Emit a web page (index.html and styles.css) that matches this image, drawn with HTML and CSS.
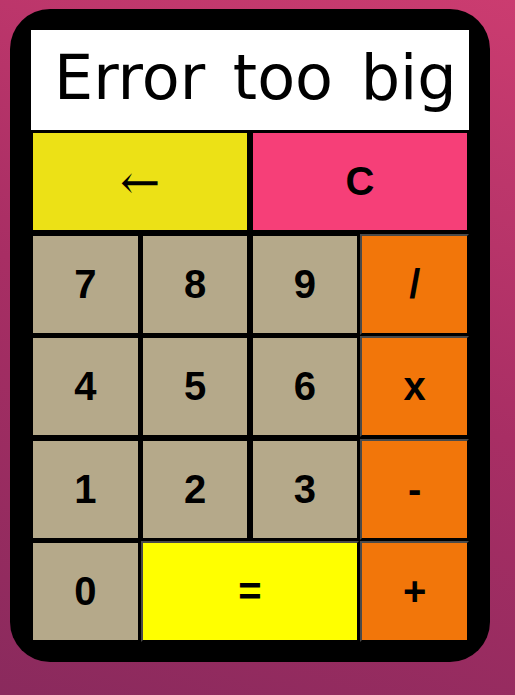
FILE: index.html
```html
<!DOCTYPE html>
<html lang="en">
<head>
<meta charset="utf-8">
<title>Calculator</title>
<link rel="stylesheet" href="styles.css">
</head>
<body>
<div class="calc">
  <div class="display">Error too big</div>
  <div class="keys">
    <button class="key wide back">←</button>
    <button class="key wide clear">C</button>
    <button class="key num">7</button>
    <button class="key num">8</button>
    <button class="key num">9</button>
    <button class="key op">/</button>
    <button class="key num">4</button>
    <button class="key num">5</button>
    <button class="key num">6</button>
    <button class="key op">x</button>
    <button class="key num">1</button>
    <button class="key num">2</button>
    <button class="key num">3</button>
    <button class="key op">-</button>
    <button class="key num">0</button>
    <button class="key wide equals">=</button>
    <button class="key op">+</button>
  </div>
</div>
</body>
</html>
```

FILE: styles.css
```css
html, body {
  margin: 0;
  height: 100%;
}
body {
  background: linear-gradient(200deg, #cb3c70 0%, #a82e64 50%, #8a2a5d 100%);
  font-family: "Liberation Sans", Arial, sans-serif;
  padding: 9px 0 0 10px;
  box-sizing: border-box;
}
.calc {
  width: 480px;
  height: 653px;
  box-sizing: border-box;
  background: #000;
  border-radius: 40px;
  padding: 21px 21px 20px 21px;
  display: flex;
  flex-direction: column;
  gap: 1px;
}
.display {
  height: 100px;
  box-sizing: border-box;
  background: #fff;
  color: #000;
  font-family: "DejaVu Sans", sans-serif;
  font-size: 62px;
  word-spacing: 8px;
  display: flex;
  align-items: center;
  padding: 0 0 5px 23px;
  white-space: nowrap;
  overflow: hidden;
}
.keys {
  flex: 1;
  display: grid;
  grid-template-columns: repeat(4, 1fr);
  grid-template-rows: repeat(5, 1fr);
  column-gap: 1.3px;
  row-gap: 1.5px;
}
.key {
  margin: 0;
  padding: 0;
  border: 2px solid #000;
  font-family: "Liberation Sans", Arial, sans-serif;
  font-weight: bold;
  font-size: 40px;
  color: #000;
  display: flex;
  align-items: center;
  justify-content: center;
}
.wide {
  grid-column: span 2;
}
.num {
  background: #b5a98a;
}
.op {
  background: #f2760a;
  border-top-color: #4a4a4a;
  border-left-color: #4a4a4a;
}
.back {
  background: #ece116;
  font-weight: normal;
  font-family: "DejaVu Serif", serif;
  font-size: 48px;
}
.clear {
  background: #f63f78;
}
.equals {
  background: #ffff00;
  border-top-color: #4a4a4a;
  border-left-color: #4a4a4a;
}
```
